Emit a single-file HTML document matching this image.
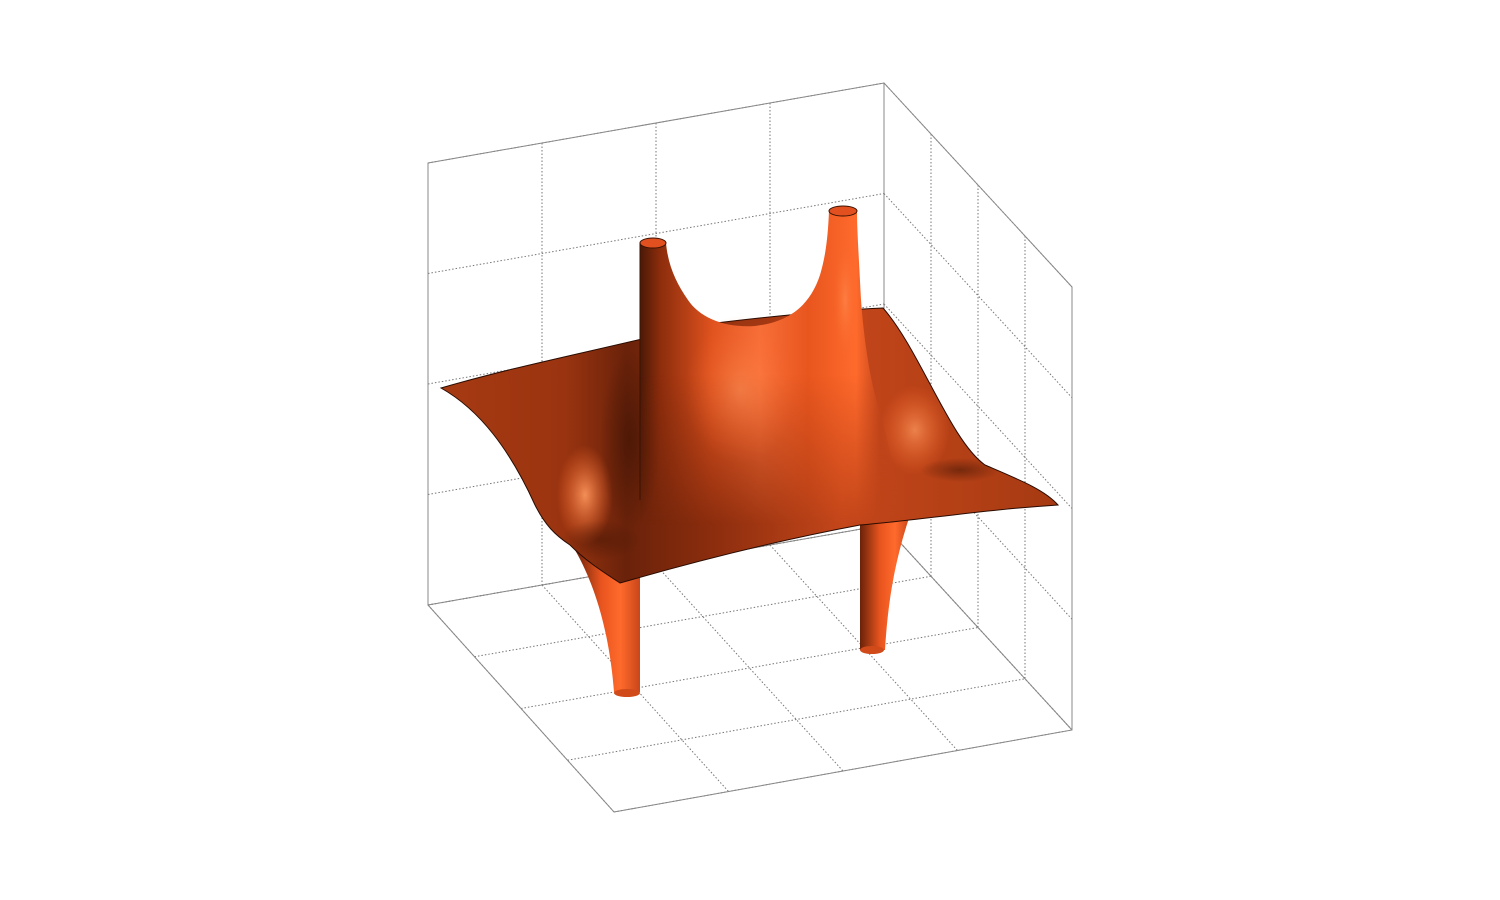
<!DOCTYPE html>
<html><head><meta charset="utf-8"><style>html,body{margin:0;padding:0;background:#fff;width:1500px;height:900px;overflow:hidden}</style></head>
<body>
<svg id="s" width="1500" height="900" viewBox="0 0 1500 900" xmlns="http://www.w3.org/2000/svg">
<defs>
<linearGradient id="sheet" x1="441" y1="0" x2="1058" y2="0" gradientUnits="userSpaceOnUse">
<stop offset="0" stop-color="#a63a12"/><stop offset="0.2" stop-color="#9a3410"/><stop offset="0.3" stop-color="#6a220a"/><stop offset="0.45" stop-color="#8e2e0e"/><stop offset="0.65" stop-color="#c4461a"/><stop offset="1" stop-color="#a63a12"/></linearGradient>
<linearGradient id="mound" x1="640" y1="0" x2="880" y2="0" gradientUnits="userSpaceOnUse">
<stop offset="0" stop-color="#4a1806"/><stop offset="0.08" stop-color="#8a2c0c"/><stop offset="0.3" stop-color="#e0521e"/><stop offset="0.5" stop-color="#f86e38"/><stop offset="0.7" stop-color="#e8561e"/><stop offset="0.9" stop-color="#ff6a2c"/><stop offset="1" stop-color="#c0441a"/></linearGradient>
<linearGradient id="fade" x1="0" y1="0" x2="0" y2="1"><stop offset="0.55" stop-color="#fff"/><stop offset="1" stop-color="#000"/></linearGradient>
<mask id="mk" maskUnits="userSpaceOnUse" x="600" y="190" width="320" height="340"><rect x="600" y="190" width="320" height="335" fill="url(#fade)"/></mask>
<linearGradient id="tube" x1="0" y1="0" x2="1" y2="0">
<stop offset="0" stop-color="#6a220a"/><stop offset="0.4" stop-color="#e8541e"/><stop offset="0.7" stop-color="#ff6a2c"/><stop offset="1" stop-color="#c8461a"/></linearGradient>
<radialGradient id="hl1" cx="0.5" cy="0.5" r="0.5"><stop offset="0" stop-color="#ff9a60" stop-opacity="0.9"/><stop offset="1" stop-color="#ff6a2c" stop-opacity="0"/></radialGradient>
<radialGradient id="dk" cx="0.5" cy="0.5" r="0.5"><stop offset="0" stop-color="#3a1204" stop-opacity="0.85"/><stop offset="1" stop-color="#3a1204" stop-opacity="0"/></radialGradient>
<clipPath id="sc"><path id="sp" d="M441,388 C520,365 600,350 700,325 C780,315 840,310 883,308 C920,350 950,440 985,465 C1020,480 1045,490 1058,505 C980,510 920,520 860,525 C780,540 700,560 620,583 C600,570 585,560 570,545 C555,535 545,525 535,505 C510,450 480,410 441,388 Z"/></clipPath>
</defs>
<g id="grid" fill="none" stroke="#777" stroke-width="1" stroke-dasharray="1.5,2"></g>
<g fill="none" stroke="#888" stroke-width="1">
<path d="M428,163 L884,83 L1072,287 L1072,730 L614,812 L428,605 Z"/>
<path d="M884,83 L884,525 M428,605 L884,525 L1072,730"/>
</g>
<path d="M575,550 C598,590 610,640 614,692 L640,692 C640,640 640,600 640,575 Z" fill="url(#tube)"/>
<ellipse cx="627" cy="693" rx="13" ry="4" fill="#d04a1a"/>
<path d="M860,515 L860,650 L885,650 C888,600 895,560 910,515 Z" fill="url(#tube)"/>
<ellipse cx="872" cy="650" rx="12" ry="4" fill="#d04a1a"/>
<use href="#sp" fill="url(#sheet)"/>
<g clip-path="url(#sc)">
<ellipse cx="585" cy="495" rx="28" ry="50" fill="url(#hl1)"/>
<ellipse cx="600" cy="540" rx="40" ry="20" fill="url(#dk)" opacity="0.5"/>
<ellipse cx="915" cy="430" rx="35" ry="45" fill="url(#hl1)" opacity="0.8"/>
<ellipse cx="960" cy="470" rx="40" ry="12" fill="url(#dk)" opacity="0.6"/>
<ellipse cx="630" cy="440" rx="30" ry="90" fill="url(#dk)" opacity="0.7"/>
</g>
<use href="#sp" fill="none" stroke="#2a0c02" stroke-width="1"/>
<g mask="url(#mk)">
<path d="M640,243 L640,525 L905,525 C895,470 885,430 878,405 C870,380 864,340 861,300 C859,260 857,230 857,211 L829,211 C828,235 826,255 820,275 C810,305 790,322 755,326 C725,328 700,318 688,300 C676,283 668,265 666,243 Z" fill="url(#mound)"/>
</g>
<ellipse cx="740" cy="390" rx="55" ry="75" fill="url(#hl1)" opacity="0.5"/>
<ellipse cx="845" cy="300" rx="12" ry="60" fill="url(#hl1)" opacity="0.5"/>
<path d="M640,243 L640,500" stroke="#3a1204" stroke-width="1"/>
<ellipse cx="653" cy="243" rx="13" ry="5" fill="#e25020" stroke="#3a1204" stroke-width="1"/>
<ellipse cx="843" cy="211" rx="14" ry="5" fill="#e25020" stroke="#3a1204" stroke-width="1"/>
</svg>
<script>
var g=document.getElementById('grid');
function L(a,b){var p=document.createElementNS('http://www.w3.org/2000/svg','line');p.setAttribute('x1',a[0]);p.setAttribute('y1',a[1]);p.setAttribute('x2',b[0]);p.setAttribute('y2',b[1]);g.appendChild(p);}
function lerp(a,b,t){return[a[0]+(b[0]-a[0])*t,a[1]+(b[1]-a[1])*t];}
function quad(A,B,C,D){for(var i=0;i<=4;i++){var t=i/4;L(lerp(A,B,t),lerp(D,C,t));L(lerp(A,D,t),lerp(B,C,t));}}
quad([428,163],[884,83],[884,525],[428,605]);
quad([884,83],[1072,287],[1072,730],[884,525]);
quad([428,605],[884,525],[1072,730],[614,812]);
</script>
</body></html>
